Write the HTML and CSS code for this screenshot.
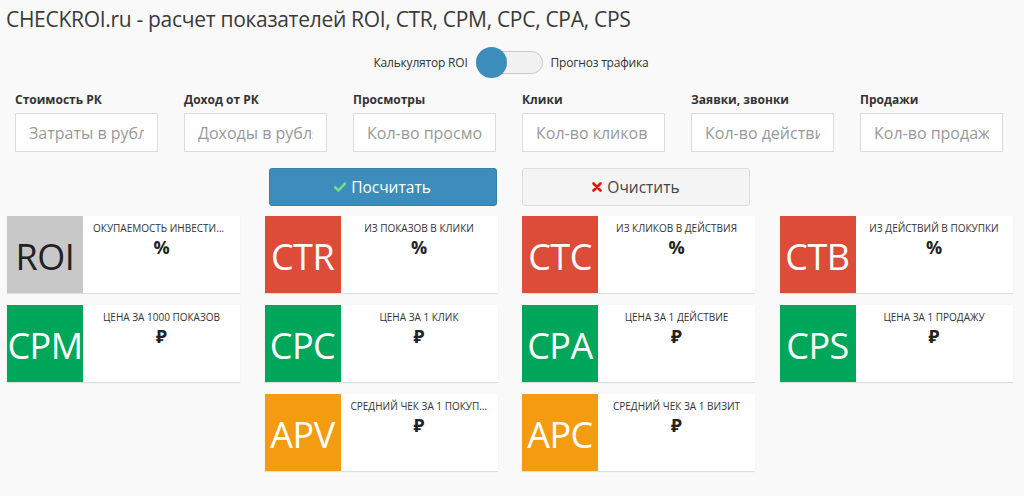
FILE: index.html
```html
<!DOCTYPE html>
<html lang="ru">
<head>
<meta charset="utf-8">
<link rel="stylesheet" href="styles.css">
</head>
<body>
<h1 class="title">CHECKROI.ru - расчет показателей ROI, CTR, CPM, CPC, CPA, CPS</h1>

<div class="switch-row">
  <span class="switch-label">Калькулятор ROI</span>
  <span class="switch"><span class="knob"></span></span>
  <span class="switch-label">Прогноз трафика</span>
</div>

<div class="fields">
  <div class="field"><label>Стоимость РК</label><input placeholder="Затраты в рублях"></div>
  <div class="field"><label>Доход от РК</label><input placeholder="Доходы в рублях"></div>
  <div class="field"><label>Просмотры</label><input placeholder="Кол-во просмотров"></div>
  <div class="field"><label>Клики</label><input placeholder="Кол-во кликов"></div>
  <div class="field"><label>Заявки, звонки</label><input placeholder="Кол-во действий"></div>
  <div class="field"><label>Продажи</label><input placeholder="Кол-во продаж"></div>
</div>

<div class="grid buttons">
  <div></div>
  <button class="btn btn-primary"><svg class="ico" viewBox="0 0 12 10" width="12" height="10"><path d="M1 5.2 L4.4 8.4 L11 1.6" fill="none" stroke="#6fe08e" stroke-width="2.6" stroke-linecap="round" stroke-linejoin="round"/></svg> Посчитать</button>
  <button class="btn btn-default"><svg class="ico" viewBox="0 0 10 10" width="10" height="10"><path d="M1.5 1.5 L8.5 8.5 M8.5 1.5 L1.5 8.5" fill="none" stroke="#e3170a" stroke-width="2.6" stroke-linecap="round"/></svg> Очистить</button>
  <div></div>
</div>

<div class="grid boxes">
  <div class="box"><div class="icon gray">ROI</div><div class="content"><div class="label">Окупаемость инвестиций</div><div class="value">%</div></div></div>
  <div class="box"><div class="icon red">CTR</div><div class="content"><div class="label">Из показов в клики</div><div class="value">%</div></div></div>
  <div class="box"><div class="icon red">CTC</div><div class="content"><div class="label">Из кликов в действия</div><div class="value">%</div></div></div>
  <div class="box"><div class="icon red">CTB</div><div class="content"><div class="label">Из действий в покупки</div><div class="value">%</div></div></div>

  <div class="box"><div class="icon green">CPM</div><div class="content"><div class="label">Цена за 1000 показов</div><div class="value">₽</div></div></div>
  <div class="box"><div class="icon green">CPC</div><div class="content"><div class="label">Цена за 1 клик</div><div class="value">₽</div></div></div>
  <div class="box"><div class="icon green">CPA</div><div class="content"><div class="label">Цена за 1 действие</div><div class="value">₽</div></div></div>
  <div class="box"><div class="icon green">CPS</div><div class="content"><div class="label">Цена за 1 продажу</div><div class="value">₽</div></div></div>

  <div></div>
  <div class="box"><div class="icon orange">APV</div><div class="content"><div class="label">Средний чек за 1 покупку</div><div class="value">₽</div></div></div>
  <div class="box"><div class="icon orange">APC</div><div class="content"><div class="label">Средний чек за 1 визит</div><div class="value">₽</div></div></div>
  <div></div>
</div>
</body>
</html>
```
FILE: styles.css
```css
* { box-sizing: border-box; }
html, body { margin: 0; padding: 0; }
body {
  background: #f9f9f9;
  font-family: "Open Sans", "Noto Sans", sans-serif;
  color: #333;
  width: 1024px;
  height: 496px;
  overflow: hidden;
}
.title {
  margin: 0;
  padding: 5px 0 0 6px;
  font-size: 21px;
  font-weight: 400;
  line-height: 28px;
  color: #3a3a3a;
  letter-spacing: -0.3px;
}
.switch-row {
  display: flex;
  justify-content: center;
  align-items: center;
  gap: 8px;
  margin-top: 14px;
  height: 30px;
  padding-right: 2px;
}
.switch-label { font-size: 12px; color: #333; letter-spacing: -0.2px; }
.switch {
  position: relative;
  width: 67px;
  height: 23px;
  border: 1px solid #c8c8c8;
  border-radius: 12px;
  background: #f1f1f1;
}
.knob {
  position: absolute;
  left: -1px;
  top: -5px;
  width: 31px;
  height: 31px;
  border-radius: 50%;
  background: #3c8dbc;
}
.fields {
  display: grid;
  grid-template-columns: repeat(6, 169px);
  margin-top: 15px;
}
.field { padding-left: 15px; }
.field label {
  display: block;
  font-size: 12px;
  font-weight: 700;
  line-height: 16px;
  margin-bottom: 5px;
  color: #333;
}
.field input {
  display: block;
  width: 143px;
  height: 39px;
  border: 1px solid #dcdcdc;
  background: #fff;
  padding: 0 13px;
  font-family: inherit;
  font-size: 16px;
  color: #555;
  outline: none;
}
.field input::placeholder { color: #999; }
.grid {
  display: grid;
  grid-template-columns: repeat(4, 233px);
  column-gap: 24.5px;
  padding-left: 7px;
}
.buttons { margin-top: 16px; }
.btn {
  height: 38px;
  width: 228px;
  border-radius: 3px;
  font-family: inherit;
  font-size: 15.5px;
  padding: 0;
  cursor: pointer;
  display: flex;
  align-items: center;
  justify-content: center;
  gap: 5px;
}
.btn-primary {
  margin-left: 4px;
  background: #3c8dbc;
  border: 1px solid #367fa9;
  color: #fff;
}
.btn-default {
  background: #f4f4f4;
  border: 1px solid #ddd;
  color: #444;
}
.ico { display: block; flex: none; }
.boxes {
  margin-top: 10px;
  row-gap: 12px;
  grid-auto-rows: 77px;
}
.box {
  display: flex;
  background: #fff;
  box-shadow: 0 1px 1px rgba(0,0,0,0.1);
}
.icon {
  width: 76px;
  flex: none;
  display: flex;
  align-items: center;
  justify-content: center;
  font-size: 36px;
  font-weight: 400;
  color: #fff;
  padding-top: 3px;
  letter-spacing: -0.5px;
}
.gray { background: #c8c8c8; color: #222; }
.red { background: #dd4b39; }
.green { background: #00a65a; }
.orange { background: #f39c12; }
.content {
  flex: 1;
  min-width: 0;
  padding: 5px 10px 0;
  text-align: center;
}
.label {
  font-size: 10px;
  text-transform: uppercase;
  line-height: 14px;
  white-space: nowrap;
  overflow: hidden;
  text-overflow: ellipsis;
  color: #333;
}
.value {
  font-size: 18px;
  font-weight: 700;
  line-height: 24px;
  color: #222;
}
```
